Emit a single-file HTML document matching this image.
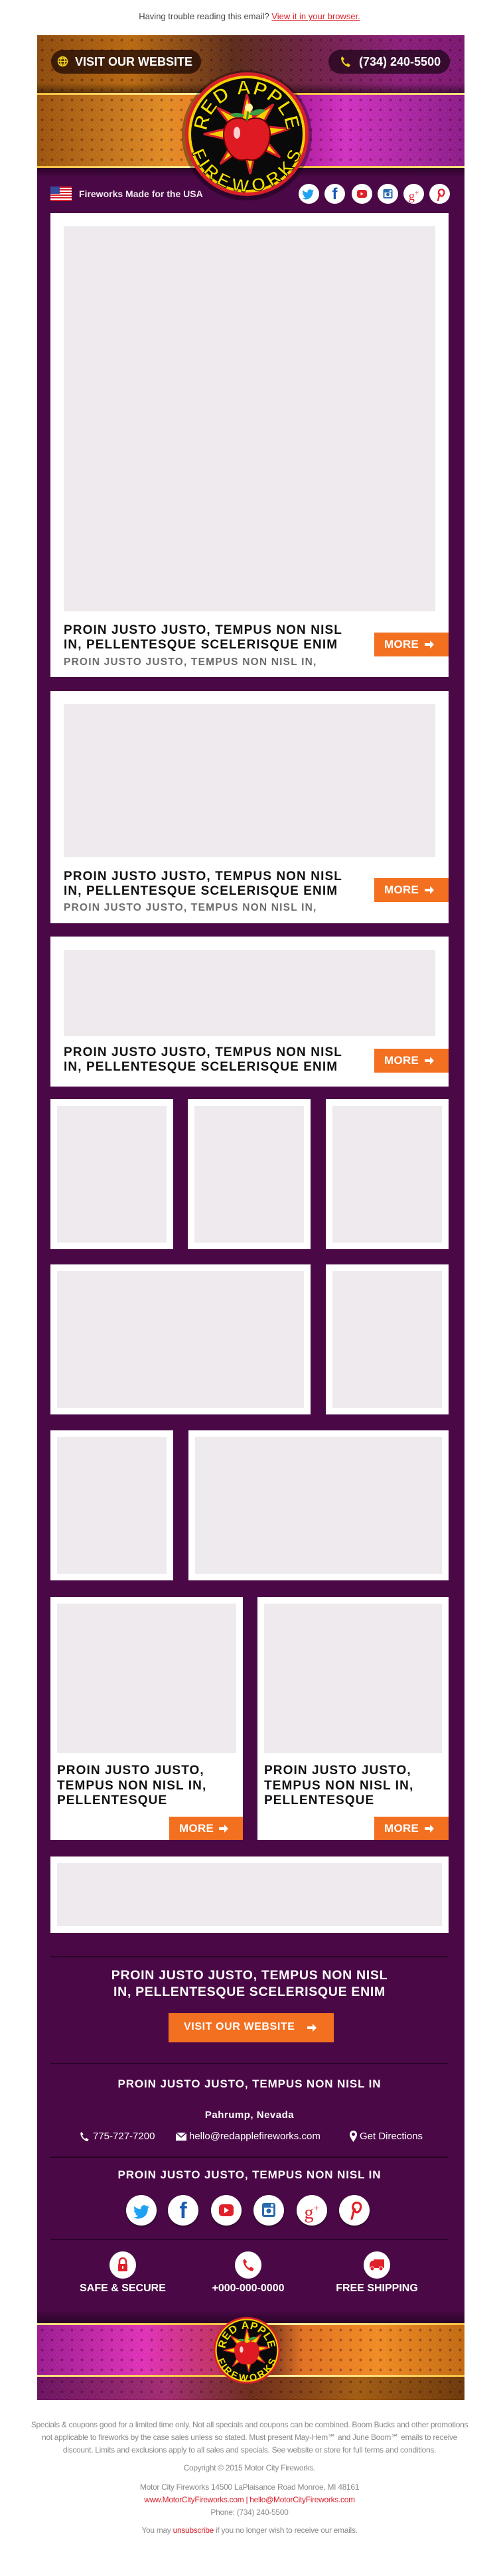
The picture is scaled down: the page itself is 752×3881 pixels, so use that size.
<!DOCTYPE html>
<html><head><meta charset="utf-8"><style>
*{margin:0;padding:0;box-sizing:border-box}
body{width:752px;height:3881px;position:relative;background:#fff;font-family:"Liberation Sans",Arial,sans-serif;overflow:hidden}
.a{position:absolute}
.purp{background:#4a0946}
.card{position:absolute;background:#fff}
.ph{position:absolute;background:#eeeaee}
.t{position:absolute;font-weight:bold;color:#111;font-size:19px;line-height:21.5px;letter-spacing:1.1px;white-space:nowrap}
.st{position:absolute;font-weight:bold;color:#6d6d6d;font-size:15.5px;letter-spacing:1.2px;white-space:nowrap}
.more{position:absolute;background:#f37021;color:#fff;font-weight:bold;font-size:17px;height:36px;line-height:36px;width:112px;padding-left:15px;letter-spacing:.3px}
.more svg{position:absolute;right:21px;top:11px}
.div{position:absolute;left:76px;width:600px;height:2px;background:#2a0328}
.dots{background-image:radial-gradient(circle,rgba(60,0,20,.35) 1.6px,transparent 2.4px),repeating-radial-gradient(circle,rgba(255,255,255,.07) 0 1px,transparent 1px 3px);background-size:15px 15px,15px 15px}
.soc{position:absolute;width:31px;height:30px;border-radius:50%;background:#fff;text-align:center}
.soc2{position:absolute;width:46px;height:46px;border-radius:50%;background:#fff;box-shadow:0 2px 3px rgba(0,0,0,.4)}
.ft{position:absolute;left:0;width:752px;text-align:center;color:#8a8a8a;font-size:12px;line-height:19px;letter-spacing:-.3px;white-space:nowrap}
.ft b{color:#d8202a;font-weight:normal}
.w{position:absolute;color:#fff;font-weight:bold;white-space:nowrap}
</style></head><body>

<div class="a" style="top:17px;left:0;width:752px;text-align:center;font-size:13px;color:#444">Having trouble reading this email? <span style="color:#d8202a;text-decoration:underline">View it in your browser.</span></div>

<div class="a purp" style="left:56px;top:53px;width:644px;height:3563px"></div>

<!-- header -->
<div class="a" style="left:56px;top:53px;width:644px;height:87px;background:linear-gradient(90deg,#8c4a0c,#b8680e 22%,#5a2a18 46%,#6a2040 62%,#8a1c78 85%,#7a1670)"></div>
<div class="a dots" style="left:56px;top:53px;width:644px;height:87px"></div>
<div class="a" style="left:56px;top:125px;width:644px;height:15px;background:linear-gradient(rgba(0,0,0,0),rgba(0,0,0,.45))"></div>
<div class="a" style="left:56px;top:140px;width:644px;height:3px;background:linear-gradient(90deg,#f8c040,#fff0a0 40%,#f8c040 60%,#ffe080)"></div>
<div class="a" style="left:56px;top:143px;width:644px;height:107px;background:linear-gradient(90deg,#9a520c,#e08a22 30%,#f07a20 40%,#401018 50%,#b01aa0 62%,#d030c0 72%,#8a1a88)"></div>
<div class="a dots" style="left:56px;top:143px;width:644px;height:107px"></div>
<div class="a" style="left:56px;top:250px;width:644px;height:3px;background:linear-gradient(90deg,#f8c040,#fff0a0 40%,#f8c040 60%,#ffe080)"></div>
<div class="a" style="left:56px;top:253px;width:644px;height:14px;background:linear-gradient(#2a0228,#4a0946)"></div>

<div class="a" style="left:77px;top:75px;width:226px;height:36px;border-radius:18px;background:rgba(30,10,5,.75)"></div>
<svg class="a" style="left:86px;top:84px" width="17" height="17" viewBox="0 0 17 17"><g fill="none" stroke="#f2d21a" stroke-width="1.5"><circle cx="8.5" cy="8.5" r="7"/><ellipse cx="8.5" cy="8.5" rx="3" ry="7"/><line x1="1.5" y1="8.5" x2="15.5" y2="8.5"/><line x1="3" y1="4.5" x2="14" y2="4.5"/><line x1="3" y1="12.5" x2="14" y2="12.5"/></g></svg>
<div class="w" style="left:113px;top:83px;font-size:18px">VISIT OUR WEBSITE</div>
<div class="a" style="left:495px;top:75px;width:183px;height:36px;border-radius:18px;background:rgba(30,5,25,.75)"></div>
<svg class="a" style="left:513px;top:84px" width="15" height="18" viewBox="0 0 15 18"><path d="M3 1l3 4-2 2c1 3 3 5 5 6l2-2 4 3-2 3C7 16 1 10 1 3z" fill="#f2d21a"/></svg>
<div class="w" style="left:541px;top:83px;font-size:18px">(734) 240-5500</div>

<!-- logo -->
<svg class="a" style="left:272px;top:102px" width="200" height="200" viewBox="0 0 200 200">
<defs><path id="ta" d="M40 100 A60 60 0 0 1 160 100"/><path id="tb" d="M32 100 A68 68 0 0 0 168 100"/></defs>
<circle cx="100" cy="102" r="98" fill="rgba(0,0,0,.35)"/>
<circle cx="100" cy="100" r="93" fill="#d8202a"/>
<circle cx="100" cy="100" r="88" fill="#f5d000"/>
<circle cx="100" cy="100" r="84" fill="#0a0a0a"/>
<polygon points="100,40 110,75 140,55 122,88 165,92 125,105 150,135 115,118 105,160 95,120 60,145 80,110 35,100 78,90 55,60 92,78" fill="#f5d000" stroke="#d8202a" stroke-width="3"/>
<path d="M100 80c-10-8-35-6-35 20 0 25 18 45 35 38 17 7 35-13 35-38 0-26-25-28-35-20z" fill="#e01a22" stroke="#600" stroke-width="2"/>
<ellipse cx="85" cy="98" rx="5" ry="9" fill="#fff" opacity=".8"/>
<path d="M100 80l2-15" stroke="#4a8a30" stroke-width="3"/><path d="M103 70c10-10 22-8 25-6-8 8-18 9-25 6z" fill="#3aa048"/><path d="M97 72c-8-6-18-4-22-2 6 6 15 6 22 2z" fill="#3aa048"/>
<circle cx="103" cy="60" r="6" fill="#fff5a0"/>
<text font-family="Liberation Sans,sans-serif" font-weight="bold" font-size="30" fill="#f5e000" stroke="#000" stroke-width="1" letter-spacing="1"><textPath href="#ta" startOffset="50%" text-anchor="middle">RED APPLE</textPath></text>
<text font-family="Liberation Sans,sans-serif" font-weight="bold" font-size="27" fill="#f5e000" stroke="#000" stroke-width="1" letter-spacing="1" dominant-baseline="hanging"><textPath href="#tb" startOffset="50%" text-anchor="middle">FIREWORKS</textPath></text>
</svg>

<svg class="a" style="left:76px;top:281px" width="32" height="22" viewBox="0 0 32 22"><rect width="32" height="22" fill="#fff"/><g fill="#d8202a"><rect y="0" width="32" height="2"/><rect y="4" width="32" height="2"/><rect y="8" width="32" height="2"/><rect y="12" width="32" height="2"/><rect y="16" width="32" height="2"/><rect y="20" width="32" height="2"/></g><rect width="14" height="11" fill="#3a4a9a"/></svg>
<div class="w" style="left:119px;top:284px;font-size:14px;color:#f0e8f0">Fireworks Made for the USA</div>

<div class="soc" style="left:450px;top:277px"><svg width="31" height="30" viewBox="0 0 31 30"><path d="M23 10c-1 .4-1.6.5-2.3.6.8-.5 1.3-1.1 1.6-2-.7.4-1.5.7-2.4.9a3.7 3.7 0 0 0-6.3 3.4C10.4 12.7 8 11.4 6.5 9.5c-1 1.7-.4 3.8 1.1 4.9-.6 0-1.2-.2-1.7-.5 0 1.8 1.3 3.4 3 3.7-.6.2-1.2.2-1.7.1.5 1.5 1.9 2.6 3.5 2.6A7.5 7.5 0 0 1 5 21.8 10.6 10.6 0 0 0 21.3 12.5V12c.7-.5 1.3-1.2 1.7-2z" fill="#1da1f2"/></svg></div>
<div class="soc" style="left:489px;top:277px;color:#1a5ab0;font-weight:bold;font-size:24px;line-height:32px">f</div>
<div class="soc" style="left:530px;top:277px"><svg width="31" height="30" viewBox="0 0 31 30"><rect x="8" y="9" width="15" height="12" rx="3.5" fill="#e0202a"/><path d="M13.5 12.5v5l4-2.5z" fill="#fff"/></svg></div>
<div class="soc" style="left:569px;top:277px"><svg width="31" height="30" viewBox="0 0 31 30"><rect x="8.5" y="8" width="14" height="14" rx="2" fill="#2a6ab0"/><rect x="10.5" y="13" width="10" height="7" fill="#fff"/><circle cx="15.5" cy="16" r="2.5" fill="#2a6ab0"/><rect x="18" y="9.5" width="3" height="2.5" fill="#fff"/></svg></div>
<div class="soc" style="left:608px;top:277px;color:#e0202a;font-size:18px;line-height:28px;font-family:'Liberation Serif',serif">g<sup style="font-size:11px">+</sup></div>
<div class="soc" style="left:647px;top:277px"><svg width="31" height="30" viewBox="0 0 31 30"><path d="M13 25l2.5-10m-1 .5c-1.5-3 0-7 3.5-7s5 2.5 4.3 5.5-2.3 4.5-4 4.5-2.5-1-2.3-2.5" fill="none" stroke="#e0202a" stroke-width="2.3" stroke-linecap="round"/></svg></div>

<!-- card 1 -->
<div class="card" style="left:76px;top:321px;width:600px;height:699px"></div>
<div class="ph" style="left:96px;top:341px;width:560px;height:580px"></div>
<div class="t" style="left:96px;top:939px">PROIN JUSTO JUSTO, TEMPUS NON NISL<br>IN, PELLENTESQUE SCELERISQUE ENIM</div>
<div class="st" style="left:96px;top:989px">PROIN JUSTO JUSTO, TEMPUS NON NISL IN,</div>
<div class="more" style="left:564px;top:953px">MORE<svg width="16" height="14" viewBox="0 0 16 14"><path d="M1 5h8V1l6 6-6 6V9H1z" fill="#fff"/></svg></div>

<!-- card 2 -->
<div class="card" style="left:76px;top:1041px;width:600px;height:350px"></div>
<div class="ph" style="left:96px;top:1061px;width:560px;height:230px"></div>
<div class="t" style="left:96px;top:1310px">PROIN JUSTO JUSTO, TEMPUS NON NISL<br>IN, PELLENTESQUE SCELERISQUE ENIM</div>
<div class="st" style="left:96px;top:1359px">PROIN JUSTO JUSTO, TEMPUS NON NISL IN,</div>
<div class="more" style="left:564px;top:1323px">MORE<svg width="16" height="14" viewBox="0 0 16 14"><path d="M1 5h8V1l6 6-6 6V9H1z" fill="#fff"/></svg></div>

<!-- card 3 -->
<div class="card" style="left:76px;top:1411px;width:600px;height:226px"></div>
<div class="ph" style="left:96px;top:1431px;width:560px;height:130px"></div>
<div class="t" style="left:96px;top:1575px">PROIN JUSTO JUSTO, TEMPUS NON NISL<br>IN, PELLENTESQUE SCELERISQUE ENIM</div>
<div class="more" style="left:564px;top:1580px">MORE<svg width="16" height="14" viewBox="0 0 16 14"><path d="M1 5h8V1l6 6-6 6V9H1z" fill="#fff"/></svg></div>

<!-- grid -->
<div class="card" style="left:76px;top:1656px;width:185px;height:226px"><div class="ph" style="left:10px;top:10px;width:165px;height:206px"></div></div>
<div class="card" style="left:283px;top:1656px;width:185px;height:226px"><div class="ph" style="left:10px;top:10px;width:165px;height:206px"></div></div>
<div class="card" style="left:491px;top:1656px;width:185px;height:226px"><div class="ph" style="left:10px;top:10px;width:165px;height:206px"></div></div>
<div class="card" style="left:76px;top:1905px;width:392px;height:226px"><div class="ph" style="left:10px;top:10px;width:372px;height:206px"></div></div>
<div class="card" style="left:491px;top:1905px;width:185px;height:226px"><div class="ph" style="left:10px;top:10px;width:165px;height:206px"></div></div>
<div class="card" style="left:76px;top:2155px;width:185px;height:226px"><div class="ph" style="left:10px;top:10px;width:165px;height:206px"></div></div>
<div class="card" style="left:284px;top:2155px;width:392px;height:226px"><div class="ph" style="left:10px;top:10px;width:372px;height:206px"></div></div>

<!-- two col -->
<div class="card" style="left:76px;top:2406px;width:290px;height:366px"><div class="ph" style="left:10px;top:10px;width:270px;height:225px"></div></div>
<div class="t" style="left:86px;top:2657px;line-height:22.5px">PROIN JUSTO JUSTO,<br>TEMPUS NON NISL IN,<br>PELLENTESQUE</div>
<div class="more" style="left:255px;top:2737px;width:111px;height:35px;line-height:35px">MORE<svg width="16" height="14" viewBox="0 0 16 14"><path d="M1 5h8V1l6 6-6 6V9H1z" fill="#fff"/></svg></div>
<div class="card" style="left:388px;top:2406px;width:288px;height:366px"><div class="ph" style="left:10px;top:10px;width:268px;height:225px"></div></div>
<div class="t" style="left:398px;top:2657px;line-height:22.5px">PROIN JUSTO JUSTO,<br>TEMPUS NON NISL IN,<br>PELLENTESQUE</div>
<div class="more" style="left:564px;top:2737px;height:35px;line-height:35px">MORE<svg width="16" height="14" viewBox="0 0 16 14"><path d="M1 5h8V1l6 6-6 6V9H1z" fill="#fff"/></svg></div>

<div class="card" style="left:76px;top:2797px;width:600px;height:115px"><div class="ph" style="left:10px;top:10px;width:580px;height:95px"></div></div>

<div class="div" style="top:2947px"></div>
<div class="w" style="left:0;width:752px;text-align:center;top:2964px;font-size:19.5px;line-height:24.5px;letter-spacing:.7px">PROIN JUSTO JUSTO, TEMPUS NON NISL<br>IN, PELLENTESQUE SCELERISQUE ENIM</div>
<div class="a" style="left:254px;top:3033px;width:249px;height:44px;background:#f37021"></div>
<div class="w" style="left:277px;top:3045px;font-size:16px;letter-spacing:.6px">VISIT OUR WEBSITE</div>
<svg class="a" style="left:462px;top:3048px" width="16" height="14" viewBox="0 0 16 14"><path d="M1 5h8V1l6 6-6 6V9H1z" fill="#fff"/></svg>

<div class="div" style="top:3108px"></div>
<div class="w" style="left:0;width:752px;text-align:center;top:3130px;font-size:17px;letter-spacing:.9px">PROIN JUSTO JUSTO, TEMPUS NON NISL IN</div>
<div class="w" style="left:0;width:752px;text-align:center;top:3178px;font-size:15px;letter-spacing:.5px">Pahrump, Nevada</div>

<svg class="a" style="left:120px;top:3211px" width="14" height="16" viewBox="0 0 15 18"><path d="M3 1l3 4-2 2c1 3 3 5 5 6l2-2 4 3-2 3C7 16 1 10 1 3z" fill="#fff"/></svg>
<div class="a" style="left:140px;top:3210px;color:#fff;font-size:15px">775-727-7200</div>
<svg class="a" style="left:265px;top:3213px" width="16" height="12" viewBox="0 0 16 12"><rect width="16" height="12" fill="#fff"/><path d="M0 0l8 7 8-7" fill="none" stroke="#4a0946" stroke-width="1.5"/></svg>
<div class="a" style="left:285px;top:3210px;color:#fff;font-size:15px">hello@redapplefireworks.com</div>
<svg class="a" style="left:527px;top:3210px" width="11" height="17" viewBox="0 0 11 17"><path d="M5.5 0A5.5 5.5 0 0 0 0 5.5C0 10 5.5 17 5.5 17S11 10 11 5.5A5.5 5.5 0 0 0 5.5 0zm0 3a2.5 2.5 0 1 1 0 5 2.5 2.5 0 0 1 0-5z" fill="#fff"/></svg>
<div class="a" style="left:542px;top:3210px;color:#fff;font-size:15px">Get Directions</div>

<div class="div" style="top:3249px"></div>
<div class="w" style="left:0;width:752px;text-align:center;top:3267px;font-size:17px;letter-spacing:.9px">PROIN JUSTO JUSTO, TEMPUS NON NISL IN</div>

<div class="soc2" style="left:190px;top:3307px"><svg width="46" height="46" viewBox="0 0 46 46"><path d="M23 10c-1 .4-1.6.5-2.3.6.8-.5 1.3-1.1 1.6-2-.7.4-1.5.7-2.4.9a3.7 3.7 0 0 0-6.3 3.4C10.4 12.7 8 11.4 6.5 9.5c-1 1.7-.4 3.8 1.1 4.9-.6 0-1.2-.2-1.7-.5 0 1.8 1.3 3.4 3 3.7-.6.2-1.2.2-1.7.1.5 1.5 1.9 2.6 3.5 2.6A7.5 7.5 0 0 1 5 21.8 10.6 10.6 0 0 0 21.3 12.5V12c.7-.5 1.3-1.2 1.7-2z" fill="#1da1f2" transform="translate(4 4) scale(1.35)"/></svg></div>
<div class="soc2" style="left:253px;top:3307px;color:#1a5ab0;font-weight:bold;font-size:34px;line-height:48px;text-align:center">f</div>
<div class="soc2" style="left:318px;top:3307px"><svg width="46" height="46" viewBox="0 0 46 46"><rect x="12" y="14" width="22" height="18" rx="5" fill="#e0202a"/><path d="M20 18.5v9l7-4.5z" fill="#fff"/></svg></div>
<div class="soc2" style="left:382px;top:3307px"><svg width="46" height="46" viewBox="0 0 46 46"><rect x="13" y="12" width="20" height="21" rx="3" fill="#2a6ab0"/><rect x="16" y="19" width="14" height="11" fill="#fff"/><circle cx="23" cy="24" r="3.5" fill="#2a6ab0"/><rect x="26" y="14" width="4" height="3.5" fill="#fff"/></svg></div>
<div class="soc2" style="left:447px;top:3307px;color:#e0202a;font-size:28px;line-height:42px;text-align:center;font-family:'Liberation Serif',serif">g<sup style="font-size:16px">+</sup></div>
<div class="soc2" style="left:511px;top:3307px"><svg width="46" height="46" viewBox="0 0 46 46"><path d="M19 36l4-15m-1.5 .5c-2-4 0-10 5-10s7 3.5 6 8-3.5 6.5-5.5 6.5-3.5-1.5-3.3-3.5" fill="none" stroke="#e0202a" stroke-width="3.2" stroke-linecap="round"/></svg></div>

<div class="div" style="top:3373px"></div>

<div class="a" style="left:165px;top:3392px;width:40px;height:41px;border-radius:50%;background:#fff"></div>
<svg class="a" style="left:177px;top:3401px" width="16" height="22" viewBox="0 0 16 22"><path d="M3 10V6a5 5 0 0 1 10 0v4" fill="none" stroke="#e0202a" stroke-width="2.5"/><rect x="1" y="10" width="14" height="11" rx="1" fill="#e0202a"/><rect x="7" y="13" width="2" height="4" fill="#fff"/></svg>
<div class="a" style="left:354px;top:3392px;width:40px;height:41px;border-radius:50%;background:#fff"></div>
<svg class="a" style="left:364px;top:3402px" width="20" height="21" viewBox="0 0 15 18"><path d="M3 1l3 4-2 2c1 3 3 5 5 6l2-2 4 3-2 3C7 16 1 10 1 3z" fill="#e0202a"/></svg>
<div class="a" style="left:548px;top:3392px;width:40px;height:41px;border-radius:50%;background:#fff"></div>
<svg class="a" style="left:556px;top:3403px" width="24" height="19" viewBox="0 0 24 19"><rect x="7" y="1" width="16" height="13" rx="1" fill="#e0202a"/><path d="M1 7l3-4h4v11H1z" fill="#e0202a"/><circle cx="5" cy="15" r="3" fill="#e0202a" stroke="#fff"/><circle cx="18" cy="15" r="3" fill="#e0202a" stroke="#fff"/></svg>

<div class="w" style="left:85px;width:200px;text-align:center;top:3439px;font-size:16px">SAFE &amp; SECURE</div>
<div class="w" style="left:274px;width:200px;text-align:center;top:3439px;font-size:16px">+000-000-0000</div>
<div class="w" style="left:468px;width:200px;text-align:center;top:3439px;font-size:16px">FREE SHIPPING</div>

<!-- footer banner -->
<div class="a" style="left:56px;top:3480px;width:644px;height:21px;background:linear-gradient(#4a0946,#2a0428)"></div>
<div class="a" style="left:56px;top:3500px;width:644px;height:3px;background:linear-gradient(90deg,#ffe080,#f8c040 40%,#fff0a0 60%,#f8c040)"></div>
<div class="a" style="left:56px;top:3503px;width:644px;height:75px;background:linear-gradient(90deg,#9a1a90,#e030b8 25%,#c03060 42%,#401018 50%,#e07020 62%,#f08a20 80%,#c06810)"></div>
<div class="a dots" style="left:56px;top:3503px;width:644px;height:75px"></div>
<div class="a" style="left:56px;top:3578px;width:644px;height:3px;background:linear-gradient(90deg,#ffe080,#f8c040 40%,#fff0a0 60%,#f8c040)"></div>
<div class="a" style="left:56px;top:3581px;width:644px;height:35px;background:linear-gradient(90deg,#6a1060,#a02a70 30%,#6a2a18 50%,#a05a10 75%,#6a3608)"></div>
<div class="a dots" style="left:56px;top:3581px;width:644px;height:35px"></div>
<svg class="a" style="left:318px;top:3487px" width="108" height="108" viewBox="0 0 200 200">
<defs><path id="ta2" d="M40 100 A60 60 0 0 1 160 100"/><path id="tb2" d="M32 100 A68 68 0 0 0 168 100"/></defs>
<circle cx="100" cy="100" r="93" fill="#d8202a"/><circle cx="100" cy="100" r="88" fill="#f5d000"/><circle cx="100" cy="100" r="84" fill="#0a0a0a"/>
<polygon points="100,40 110,75 140,55 122,88 165,92 125,105 150,135 115,118 105,160 95,120 60,145 80,110 35,100 78,90 55,60 92,78" fill="#f5d000" stroke="#d8202a" stroke-width="3"/>
<path d="M100 80c-10-8-35-6-35 20 0 25 18 45 35 38 17 7 35-13 35-38 0-26-25-28-35-20z" fill="#e01a22"/>
<ellipse cx="85" cy="98" rx="5" ry="9" fill="#fff" opacity=".8"/>
<path d="M103 70c10-10 22-8 25-6-8 8-18 9-25 6z" fill="#3aa048"/><path d="M97 72c-8-6-18-4-22-2 6 6 15 6 22 2z" fill="#3aa048"/>
<text font-family="Liberation Sans,sans-serif" font-weight="bold" font-size="30" fill="#f5e000" letter-spacing="1"><textPath href="#ta2" startOffset="50%" text-anchor="middle">RED APPLE</textPath></text>
<text font-family="Liberation Sans,sans-serif" font-weight="bold" font-size="27" fill="#f5e000" letter-spacing="1" dominant-baseline="hanging"><textPath href="#tb2" startOffset="50%" text-anchor="middle">FIREWORKS</textPath></text>
</svg>

<!-- footer text -->
<div class="ft" style="top:3644px">Specials &amp; coupons good for a limited time only. Not all specials and coupons can be combined. Boom Bucks and other promotions<br>not applicable to fireworks by the case sales unless so stated. Must present May-Hem℠ and June Boom℠ emails to receive<br>discount. Limits and exclusions apply to all sales and specials. See website or store for full terms and conditions.</div>
<div class="ft" style="top:3709px">Copyright © 2015 Motor City Fireworks.</div>
<div class="ft" style="top:3738px">Motor City Fireworks 14500 LaPlaisance Road Monroe, MI 48161<br><b>www.MotorCityFireworks.com | hello@MotorCityFireworks.com</b><br>Phone: (734) 240-5500</div>
<div class="ft" style="top:3803px">You may <b>unsubscribe</b> if you no longer wish to receive our emails.</div>
</body></html>
